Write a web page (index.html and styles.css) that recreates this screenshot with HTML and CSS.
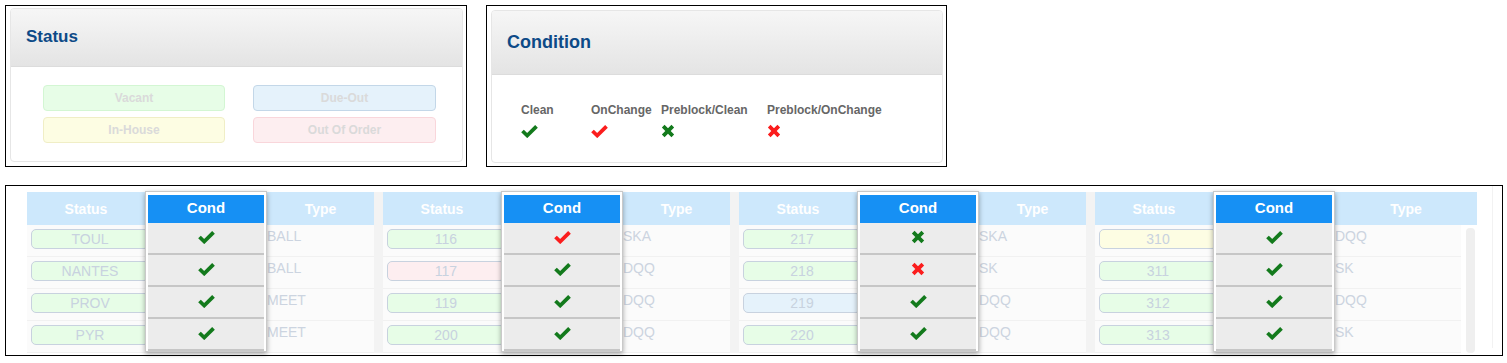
FILE: index.html
```html
<!DOCTYPE html>
<html lang="en">
<head>
  <meta charset="UTF-8">
  <meta name="viewport" content="width=device-width, initial-scale=1.0">
  <title>Housekeeping legend</title>
  <link rel="stylesheet" href="styles.css">
</head>
<body>
  <main class="page">
    <div class="top">
      <section class="frame">
        <div class="panel">
          <div class="panel-head status-head">
            <h2>Status</h2>
          </div>
          <div class="status-grid">
            <div class="st-btn green">Vacant</div>
            <div class="st-btn blue">Due-Out</div>
            <div class="st-btn yellow">In-House</div>
            <div class="st-btn red">Out Of Order</div>
          </div>
        </div>
      </section>

      <section class="frame frame-cond">
        <div class="panel panel-cond">
          <div class="panel-head cond-head">
            <h2>Condition</h2>
          </div>
          <div class="legend">
            <span>Clean</span>
            <span>OnChange</span>
            <span>Preblock/Clean</span>
            <span>Preblock/OnChange</span>
            <i class="ic" data-ic="gc"></i>
            <i class="ic" data-ic="rc"></i>
            <i class="ic" data-ic="gx"></i>
            <i class="ic" data-ic="rx"></i>
          </div>
        </div>
      </section>
    </div>

    <section class="frame frame-wide">
      <div class="groups">

      </div>
      <div class="track"></div>
    </section>
  </main>

  <script>
    const icons = {
      gc: '<svg width="17" height="14" viewBox="0 0 17 14"><path d="M1.5 7 L6.2 11.5 L15.5 2.3" fill="none" stroke="#137a1c" stroke-width="3.8"/></svg>',
      rc: '<svg width="17" height="14" viewBox="0 0 17 14"><path d="M1.5 7 L6.2 11.5 L15.5 2.3" fill="none" stroke="#fb1d1d" stroke-width="3.8"/></svg>',
      gx: '<svg width="14" height="14" viewBox="0 0 14 14"><path d="M2.2 2.2 L11.8 11.8 M11.8 2.2 L2.2 11.8" fill="none" stroke="#137a1c" stroke-width="3.8"/></svg>',
      rx: '<svg width="14" height="14" viewBox="0 0 14 14"><path d="M2.2 2.2 L11.8 11.8 M11.8 2.2 L2.2 11.8" fill="none" stroke="#fb1d1d" stroke-width="3.8"/></svg>'
    }

    const groups = [
      {
        s: [['TOUL','green'],['NANTES','green'],['PROV','green'],['PYR','green']],
        c: ['gc','gc','gc','gc'],
        t: ['BALL','BALL','MEET','MEET']
      },
      {
        s: [['116','green'],['117','red'],['119','green'],['200','green']],
        c: ['rc','gc','gc','gc'],
        t: ['SKA','DQQ','DQQ','DQQ']
      },
      {
        s: [['217','green'],['218','green'],['219','blue'],['220','green']],
        c: ['gx','rx','gc','gc'],
        t: ['SKA','SK','DQQ','DQQ']
      },
      {
        s: [['310','yellow'],['311','green'],['312','green'],['313','green']],
        c: ['gc','gc','gc','gc'],
        t: ['DQQ','SK','DQQ','SK'],
        last: true
      }
    ]

    document.querySelectorAll('.ic').forEach(item => item.innerHTML = icons[item.dataset.ic])

    const wrap = document.querySelector('.groups')

    function markup(g) {
      return `
        <div class="group ${g.last ? 'group-last' : ''}">
          <div class="col col-status">
            <div class="th">Status</div>
            ${g.s.map(it => `<div class="td"><div class="pill ${it[1]}">${it[0]}</div></div>`).join('')}
          </div>
          <div class="col col-cond">
            <div class="th-cond">Cond</div>
            ${g.c.map(it => `<div class="td-cond">${icons[it]}</div>`).join('')}
          </div>
          <div class="col col-type">
            <div class="th">Type</div>
            <div class="type-body">
              <div class="type-rows">
                ${g.t.map(it => `<div class="td td-type">${it}</div>`).join('')}
              </div>
              ${g.last ? '<div class="scroll"></div>' : ''}
            </div>
          </div>
        </div>`
    }

    groups.forEach(g => wrap.insertAdjacentHTML('beforeend', markup(g)))
  </script>
</body>
</html>
```

FILE: styles.css
```css
* {
  padding: 0;
  margin: 0;
  box-sizing: border-box;
}

body {
  font-family: 'Liberation Sans', Arial, Helvetica, sans-serif;
  background-color: #fff;
  color: #333;
}

.page {
  padding: 5px;
}

.top {
  display: flex;
  gap: 19px;
  margin-bottom: 18px;
}

.frame {
  width: 462px;
  height: 162px;
  border: 1px solid #000;
  padding: 2px 3px 0 4px;
  background-color: #fff;
}

.frame-cond {
  width: 461px;
}

.panel {
  border: 1px solid #e6e6e6;
  border-radius: 4px;
  height: 154px;
  overflow: hidden;
}

.panel-cond {
  margin-top: 2px;
  height: 153px;
}

.panel-head {
  background: linear-gradient(#f6f6f6, #e4e4e4);
  border-bottom: 1px solid #dcdcdc;
  display: flex;
  align-items: center;
  padding-left: 15px;
}

.panel-head h2 {
  color: #0d4a87;
  font-weight: 700;
}

.status-head {
  height: 58px;
}

.status-head h2 {
  font-size: 17px;
  margin-top: -1px;
}

.cond-head {
  height: 64px;
  align-items: flex-start;
  padding-top: 21px;
}

.cond-head h2 {
  font-size: 18px;
}

.status-grid {
  display: grid;
  grid-template-columns: 182px 183px;
  column-gap: 28px;
  row-gap: 6px;
  padding: 18px 0 0 32px;
}

.st-btn {
  height: 26px;
  border: 1px solid;
  border-radius: 4px;
  display: flex;
  justify-content: center;
  align-items: center;
  font-size: 12px;
  font-weight: 700;
  color: #dadada;
}

.green {
  background-color: #e7fde7;
  border-color: #d3f6d3;
}

.blue {
  background-color: #e5f2fb;
  border-color: #c3d7e8;
}

.yellow {
  background-color: #fdfde3;
  border-color: #f0eec6;
}

.red {
  background-color: #fdeef0;
  border-color: #f9d6db;
}

.legend {
  display: grid;
  grid-template-columns: 70px 70px 106px auto;
  row-gap: 7px;
  padding: 28px 0 0 29px;
  font-size: 12px;
  font-weight: 700;
  color: #666;
}

.ic {
  display: block;
  height: 14px;
}

.ic svg {
  display: block;
}

/* bottom table */

.frame-wide {
  width: 1498px;
  height: 171px;
  padding: 6px 0 0 21px;
  display: flex;
  position: relative;
}

.groups {
  display: flex;
  gap: 9px;
  background-color: #f3f3f3;
  align-self: flex-start;
}

.group {
  display: flex;
  width: 347px;
}

.group-last {
  width: 382px;
}

.col {
  display: flex;
  flex-direction: column;
}

.col-status {
  width: 118px;
}

.col-type {
  flex-grow: 1;
}

.th {
  height: 33px;
  background-color: #cde8fc;
  color: #fff;
  font-size: 14px;
  font-weight: 700;
  display: flex;
  justify-content: center;
  align-items: center;
}

.td {
  height: 32px;
  background-color: #fbfbfb;
  border-bottom: 1px solid #f1f1f1;
}

.pill {
  height: 20px;
  margin: 4px -4px 0 4px;
  border: 1px solid;
  border-radius: 5px;
  font-size: 14px;
  color: #c8d2df;
  display: flex;
  justify-content: center;
  align-items: center;
}

.col-cond {
  width: 122px;
  margin-top: -1px;
  border: 1px solid #c9c9c9;
  padding: 3px 2px 0;
  background-color: #fff;
  box-shadow: 0 2px 5px rgba(0, 0, 0, .35);
  position: relative;
  z-index: 1;
  align-self: flex-start;
}

.th-cond {
  height: 28px;
  background-color: #1690f4;
  color: #fff;
  font-size: 15px;
  font-weight: 700;
  display: flex;
  justify-content: center;
  align-items: center;
  padding-bottom: 3px;
}

.td-cond {
  height: 32px;
  background-color: #ececec;
  border-bottom: 2px solid #c6c6c6;
  display: flex;
  justify-content: center;
  padding-top: 7px;
}

.td-cond svg {
  display: block;
}

.type-body {
  display: flex;
}

.type-rows {
  flex-grow: 1;
}

.td-type {
  font-size: 14px;
  color: #ccd4e0;
  padding-top: 3px;
}

.group-last .type-rows {
  flex-grow: 0;
  width: 126px;
}

.group-last .type-body {
  background-color: #fff;
}

.scroll {
  width: 9px;
  margin: 3px 0 0 5px;
  background-color: #efefef;
  border-radius: 4px;
}

.track {
  width: 1px;
  height: 162px;
  margin: -6px 0 0 15px;
  background-color: #f2f2f2;
}
```
